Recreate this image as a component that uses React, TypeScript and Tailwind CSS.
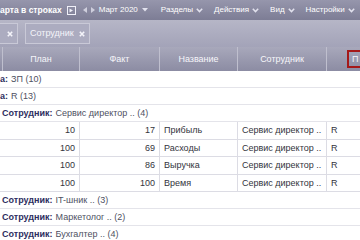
import { ReactNode } from 'react'

const grid = 'grid grid-cols-[3px_77px_80px_78px_89px_1fr]'

function Chevron() {
  return (
    <svg width="7" height="5" viewBox="0 0 7 5" className="ml-[3px] shrink-0">
      <path d="M0.8 0.8 L3.5 3.6 L6.2 0.8" fill="none" stroke="#e2e2ee" strokeWidth="1.5" />
    </svg>
  )
}

function Menu({ label }: { label: string }) {
  return (
    <span className="flex items-center">
      {label}
      <Chevron />
    </span>
  )
}

function Close() {
  return (
    <svg width="6" height="6" viewBox="0 0 6 6" className="shrink-0">
      <path d="M0.8 0.8 L5.2 5.2 M5.2 0.8 L0.8 5.2" stroke="#f4f4fa" strokeWidth="1.6" />
    </svg>
  )
}

function GroupRow({ label, value, indent }: { label: string; value: string; indent?: boolean }) {
  return (
    <div
      className={`h-[17px] flex items-center border-b border-[#e4e4ea] whitespace-nowrap ${
        indent ? 'pl-[2px]' : 'pl-0'
      }`}
    >
      <span className="font-bold text-[#2d2d5e]">{label}</span>
      <span className="ml-[3px] text-[#4e5062]">{value}</span>
    </div>
  )
}

function Cell({ children, right }: { children?: ReactNode; right?: boolean }) {
  return (
    <div
      className={`flex items-center border-r border-[#dcdce4] px-[4px] overflow-hidden whitespace-nowrap ${
        right ? 'justify-end' : ''
      }`}
    >
      {children}
    </div>
  )
}

const data = [
  { plan: '10', fact: '17', name: 'Прибыль', h: 'h-[18px]' },
  { plan: '100', fact: '69', name: 'Расходы', h: 'h-[17px]' },
  { plan: '100', fact: '86', name: 'Выручка', h: 'h-[18px]' },
  { plan: '100', fact: '100', name: 'Время', h: 'h-[17px]' },
]

export default function App() {
  return (
    <div className="w-[360px] h-[240px] overflow-hidden bg-white font-['Liberation_Sans',Arial,sans-serif] text-[9px] leading-none">
      {/* toolbar */}
      <div className="h-[20px] flex items-center whitespace-nowrap bg-gradient-to-b from-[#9696ac] to-[#7d7d95] text-white text-[8px]">
        <span className="font-bold text-[8.5px]">арта в строках</span>
        <svg width="9" height="9" viewBox="0 0 9 9" className="ml-[5px] shrink-0">
          <rect x="0.5" y="0.5" width="8" height="8" fill="none" stroke="#f0f0f8" />
          <path d="M2.5 2.5 L6 4.5 L2.5 6.5 Z" fill="#f0f0f8" />
        </svg>
        <svg width="4" height="6" viewBox="0 0 4 6" className="ml-[7px] shrink-0">
          <path d="M4 0 L0 3 L4 6 Z" fill="#cfcfdd" />
        </svg>
        <svg width="4" height="6" viewBox="0 0 4 6" className="ml-[4px] shrink-0">
          <path d="M0 0 L4 3 L0 6 Z" fill="#cfcfdd" />
        </svg>
        <span className="ml-[4px] flex items-center">
          Март 2020
          <svg width="6" height="4" viewBox="0 0 6 4" className="ml-[4px]">
            <path d="M0 0 L6 0 L3 3.5 Z" fill="#e2e2ee" />
          </svg>
        </span>
        <div className="ml-[13px] flex items-center gap-[11px]">
          <Menu label="Разделы" />
          <Menu label="Действия" />
          <Menu label="Вид" />
          <Menu label="Настройки" />
        </div>
      </div>

      {/* filter chips */}
      <div className="h-[27px] flex items-center gap-[7px] bg-gradient-to-b from-[#b6b6c7] to-[#a3a3b8]">
        <div className="h-[21px] w-[18px] flex items-center justify-end pr-[4px] border border-l-0 border-[#c9c9d7] bg-[#acacc0]">
          <Close />
        </div>
        <div className="h-[21px] flex items-center gap-[5px] px-[4px] border border-[#c9c9d7] bg-[#acacc0] text-[#f4f4fa]">
          Сотрудник
          <Close />
        </div>
      </div>

      {/* header */}
      <div className={`${grid} h-[24px] bg-gradient-to-b from-[#a8a8bb] to-[#8c8ca3] text-[#f6f6fa]`}>
        <div className="border-r border-[#bfbfce]" />
        <div className="flex items-center justify-center border-r border-[#bfbfce]">План</div>
        <div className="flex items-center justify-center border-r border-[#bfbfce]">Факт</div>
        <div className="flex items-center justify-center border-r border-[#bfbfce]">Название</div>
        <div className="flex items-center justify-center border-r border-[#bfbfce]">Сотрудник</div>
        <div className="flex items-center pl-[20px] overflow-hidden">
          <span className="h-[18px] w-[30px] flex items-center pl-[3px] border-2 border-[#a51818] shrink-0">
            П
          </span>
        </div>
      </div>

      {/* rows */}
      <GroupRow label="а:" value="ЗП (10)" />
      <GroupRow label="а:" value="R (13)" />
      <GroupRow label="Сотрудник:" value="Сервис директор .. (4)" indent />
      {data.map((r) => (
        <div key={r.name} className={`${grid} ${r.h} border-b border-[#dcdce4] text-[#33343c]`}>
          <div />
          <Cell right>{r.plan}</Cell>
          <Cell right>{r.fact}</Cell>
          <Cell>{r.name}</Cell>
          <Cell>Сервис директор ..</Cell>
          <div className="flex items-center px-[4px]">R</div>
        </div>
      ))}
      <GroupRow label="Сотрудник:" value="IT-шник .. (3)" indent />
      <GroupRow label="Сотрудник:" value="Маркетолог .. (2)" indent />
      <GroupRow label="Сотрудник:" value="Бухгалтер .. (4)" indent />
    </div>
  )
}
